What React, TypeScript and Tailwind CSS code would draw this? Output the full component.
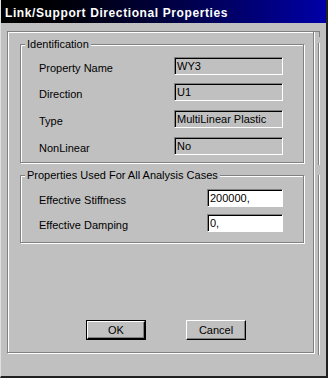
const font = { fontFamily: '"Liberation Sans", Arial, sans-serif' }

function GroupBox({ title, className, children }: { title: string; className: string; children: React.ReactNode }) {
  return (
    <div
      className={`relative border border-[#808080] shadow-[inset_1px_1px_0_#fff,1px_1px_0_#fff] ${className}`}
    >
      <span className="absolute -top-[8px] left-[4px] bg-[#c0c0c0] px-[2px] text-[11px] leading-[14px] text-black">
        {title}
      </span>
      {children}
    </div>
  )
}

function ReadField({ value }: { value: string }) {
  return (
    <div className="h-[18px] w-[109px] border border-t-[#808080] border-l-[#808080] border-b-white border-r-white">
      <div className="h-full w-full border-t border-l border-black pl-[1px] text-[11px] leading-[15px] text-black">
        {value}
      </div>
    </div>
  )
}

function InputField({ value }: { value: string }) {
  return (
    <div className="h-[18px] w-[76px] border border-t-[#808080] border-l-[#808080] border-b-white border-r-white">
      <div className="h-full w-full border-t border-l border-black bg-white pl-[1px] text-[11px] leading-[15px] text-black">
        {value}
      </div>
    </div>
  )
}

function Button({ label, isDefault }: { label: string; isDefault?: boolean }) {
  return (
    <div className={`h-[20px] w-[60px] ${isDefault ? 'border border-black' : ''}`}>
      <div className="flex h-full w-full items-center justify-center border border-t-white border-l-white border-b-black border-r-black shadow-[inset_-1px_-1px_0_#808080] text-[11px] text-black">
        {label}
      </div>
    </div>
  )
}

const idRows = [
  { label: 'Property Name', value: 'WY3', mt: 'mt-[12px]' },
  { label: 'Direction', value: 'U1', mt: 'mt-[8px]' },
  { label: 'Type', value: 'MultiLinear Plastic', mt: 'mt-[9px]' },
  { label: 'NonLinear', value: 'No', mt: 'mt-[9px]' },
]

export default function App() {
  return (
    <div
      style={font}
      className="relative h-[378px] w-[328px] overflow-hidden border-l border-b-2 border-r-2 border-l-[#dfdfdf] border-b-[#202020] border-r-[#202020] bg-[#c0c0c0]"
    >
      <div className="flex h-[23px] items-center bg-linear-to-r from-[#000000] to-[#0000a8] pl-[4px] pt-[3px] text-[12px] font-bold tracking-[0.6px] text-white">
        Link/Support Directional Properties
      </div>

      <div className="pl-[6px] pt-[8px]">
        <div className="relative h-[322px] w-[307px] border border-[#808080] shadow-[inset_1px_1px_0_#fff,1px_1px_0_#fff]">
          <GroupBox title="Identification" className="ml-[12px] mt-[12px] h-[119px] w-[284px]">
            {idRows.map((r) => (
              <div key={r.label} className={`flex h-[18px] items-center ${r.mt}`}>
                <span className="w-[153px] pl-[18px] pt-[5px] text-[11px] text-black">{r.label}</span>
                <ReadField value={r.value} />
              </div>
            ))}
          </GroupBox>

          <GroupBox title="Properties Used For All Analysis Cases" className="ml-[12px] mt-[12px] h-[68px] w-[284px]">
            <div className="mt-[13px] flex h-[18px] items-center">
              <span className="w-[186px] pl-[18px] pt-[5px] text-[11px] text-black">Effective Stiffness</span>
              <InputField value="200000," />
            </div>
            <div className="mt-[7px] flex h-[18px] items-center">
              <span className="w-[186px] pl-[18px] pt-[5px] text-[11px] text-black">Effective Damping</span>
              <InputField value="0," />
            </div>
          </GroupBox>

          <div className="ml-[78px] mt-[77px] flex gap-[40px]">
            <Button label="OK" isDefault />
            <Button label="Cancel" />
          </div>
        </div>
      </div>

      <div className="absolute left-[313px] top-[31px] h-px w-[6px] bg-[#808080]" />
      <div className="absolute left-[318px] top-[31px] h-[6px] w-px bg-[#808080]" />
      <div className="absolute left-[317px] top-[43px] h-[122px] w-px bg-[#808080] shadow-[1px_0_0_#fff]" />
      <div className="absolute left-[317px] top-[175px] h-[180px] w-px bg-[#808080] shadow-[1px_0_0_#fff]" />
    </div>
  )
}
